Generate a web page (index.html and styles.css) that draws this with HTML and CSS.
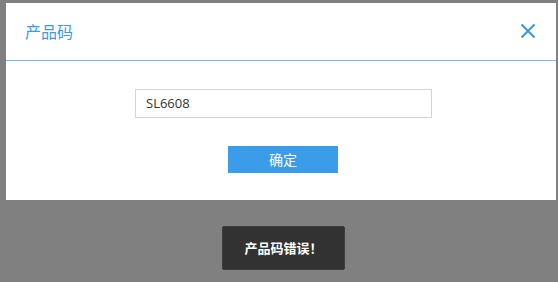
FILE: index.html
```html
<!DOCTYPE html>
<html lang="zh">
<head>
<meta charset="utf-8">
<link rel="stylesheet" href="styles.css">
</head>
<body>
<div class="dialog">
  <div class="header">
    <span class="title">产品码</span>
    <svg class="close" width="16" height="16" viewBox="0 0 16 16"><path d="M1.5 1.5L14.5 14.5M14.5 1.5L1.5 14.5" stroke="#3a96dd" stroke-width="2" fill="none"/></svg>
  </div>
  <div class="body">
    <div class="input">SL6608</div>
    <div class="btn">确定</div>
  </div>
</div>
<div class="toast-row">
  <div class="toast">产品码错误！</div>
</div>
</body>
</html>
```
FILE: styles.css
```css
html, body {
  margin: 0;
  padding: 0;
  width: 558px;
  height: 282px;
  overflow: hidden;
}
body {
  background: #808080;
  font-family: "Noto Sans", "Noto Sans CJK SC", sans-serif;
  padding-top: 3px;
  box-sizing: border-box;
}
.dialog {
  margin-left: 6px;
  width: 550px;
  height: 197px;
  background: #fff;
  box-sizing: border-box;
}
.header {
  height: 57px;
  border-bottom: 1px solid #7db9e6;
  display: flex;
  align-items: center;
  justify-content: space-between;
  padding: 0 20px 0 19px;
  box-sizing: content-box;
}
.title {
  font-family: "Noto Sans CJK SC", sans-serif;
  font-size: 16px;
  color: #3d9ae0;
  margin-top: -2px;
}
.close {
  margin-top: -2px;
}
.body {
  display: flex;
  flex-direction: column;
  align-items: flex-start;
  padding-top: 28px;
}
.input {
  margin-left: 129px;
  width: 297px;
  height: 29px;
  border: 1px solid #d4d4d4;
  box-sizing: border-box;
  font-size: 13px;
  color: #333;
  line-height: 27px;
  padding-left: 10px;
  font-family: "Open Sans", "Noto Sans CJK SC", sans-serif;
}
.btn {
  margin-left: 222px;
  margin-top: 28px;
  width: 110px;
  height: 27px;
  background: #3b9ce9;
  color: #fff;
  font-family: "Noto Sans CJK SC", sans-serif;
  font-size: 14px;
  line-height: 27px;
  text-align: center;
}
.toast-row {
  padding-top: 26px;
  padding-left: 222px;
}
.toast {
  width: 123px;
  height: 44px;
  background: #323232;
  border: 1px solid #3d3d3d;
  border-radius: 2px;
  box-sizing: border-box;
  color: #fff;
  font-family: "Noto Sans CJK SC", sans-serif;
  font-size: 13px;
  font-weight: bold;
  line-height: 42px;
  text-align: center;
}
```
